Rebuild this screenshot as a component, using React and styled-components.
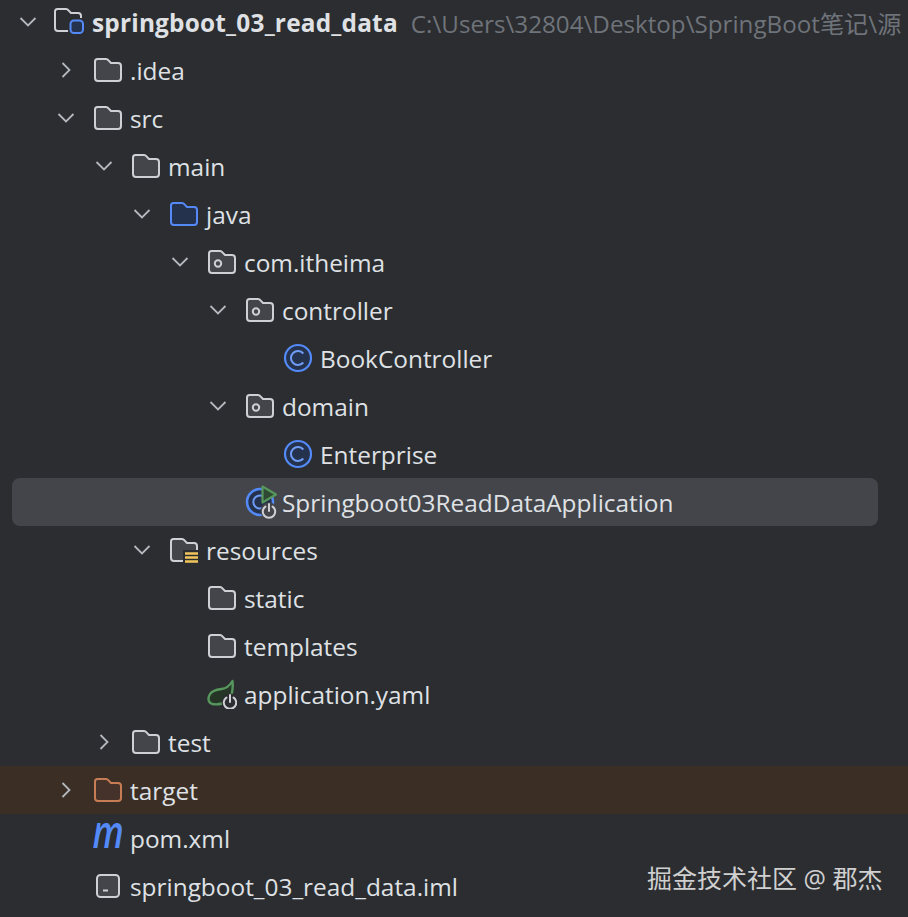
import styled, { createGlobalStyle } from "styled-components";

const GlobalStyle = createGlobalStyle`
  html, body {
    margin: 0;
    height: 100%;
    background: #2b2d30;
    overflow: hidden;
  }
`;

const BLUE = "#548af7";
const GREEN = "#57965c";

const FOLDER_PATH =
  "M1 5.5Q1 3 3.5 3H12Q13.5 3 14.5 4.4L17 7H24Q27 7 27 10V22Q27 25 24 25H4Q1 25 1 22Z";

function Folder({ stroke = "#ced0d6", fill = "#43454a", children }) {
  return (
    <svg width="28" height="28" viewBox="0 0 28 28" fill="none">
      <path d={FOLDER_PATH} fill={fill} stroke={stroke} strokeWidth="2" strokeLinejoin="round" />
      {children}
    </svg>
  );
}

function PackageIcon() {
  return (
    <Folder>
      <circle cx="10" cy="15.5" r="3.2" stroke="#ced0d6" strokeWidth="2" />
    </Folder>
  );
}

function ResourcesIcon() {
  return (
    <Folder>
      <rect x="13" y="14" width="15" height="14" fill="#2b2d30" />
      <path d="M15 17.5H28M15 21.5H28M15 25.5H28" stroke="#f2c55c" strokeWidth="2.6" />
    </Folder>
  );
}

function RootIcon() {
  return (
    <svg width="32" height="32" viewBox="0 0 32 32" fill="none">
      <path d={FOLDER_PATH} fill="#2b2d30" stroke="#ced0d6" strokeWidth="2" strokeLinejoin="round" />
      <rect x="14" y="12" width="18" height="18" rx="5" fill="#2b2d30" />
      <rect x="16.5" y="14.5" width="12.5" height="12.5" rx="3.5" fill="#25324d" stroke={BLUE} strokeWidth="2" />
    </svg>
  );
}

function ClassIcon() {
  return (
    <svg width="30" height="30" viewBox="0 0 30 30" fill="none">
      <circle cx="15" cy="15" r="13" fill="#25324d" stroke={BLUE} strokeWidth="2.2" />
      <path d="M20.3 10.5A7 7 0 1 0 20.3 19.5" stroke="#6f9cf5" strokeWidth="2" />
    </svg>
  );
}

function PowerBadge({ cx, cy, bg }) {
  return (
    <g>
      <circle cx={cx} cy={cy} r="8.5" fill={bg} />
      <path
        d={`M${cx - 3.6} ${cy - 4.4}A6.2 6.2 0 1 0 ${cx + 3.6} ${cy - 4.4}`}
        stroke="#ced0d6"
        strokeWidth="2"
        strokeLinecap="round"
      />
      <path d={`M${cx} ${cy - 7}V${cy}`} stroke="#ced0d6" strokeWidth="2" strokeLinecap="round" />
    </g>
  );
}

function RunnableClassIcon() {
  return (
    <svg width="34" height="34" viewBox="-2 0 34 34" fill="none">
      <circle cx="15" cy="17" r="13" fill="#25324d" stroke={BLUE} strokeWidth="2.6" />
      <path d="M20 12.8A6.6 6.6 0 1 0 20 21.2" stroke="#6f9cf5" strokeWidth="2" />
      <path d="M17.5 1.5L31 9.5L17.5 17.5Z" fill="#2f4a33" stroke={GREEN} strokeWidth="2.2" strokeLinejoin="round" />
      <PowerBadge cx={24} cy={26} bg="#43454a" />
    </svg>
  );
}

function SpringIcon() {
  return (
    <svg width="30" height="30" viewBox="0 0 30 30" fill="none">
      <path
        d="M25.5 2C26 7 26.5 12 23.5 18C19.5 25 10.5 26 5.5 25C1.5 24 0.5 20 2.5 16C4.5 12 9.5 10.5 14.5 10C19.5 9.5 22.5 7 25.5 2Z"
        fill="#253627"
        stroke={GREEN}
        strokeWidth="2.4"
        strokeLinejoin="round"
      />
      <PowerBadge cx={23} cy={23} bg="#2b2d30" />
    </svg>
  );
}

function ModuleFileIcon() {
  return (
    <svg width="26" height="26" viewBox="0 0 26 26" fill="none">
      <rect x="2" y="2" width="22" height="22" rx="3.5" fill="#43454a" stroke="#ced0d6" strokeWidth="2" />
      <path d="M8 17.5H13" stroke="#ced0d6" strokeWidth="2" />
    </svg>
  );
}

function Chevron({ open }) {
  return (
    <svg width="20" height="20" viewBox="0 0 20 20" fill="none">
      <path
        d={open ? "M2.5 6L10 13.5L17.5 6" : "M6.5 3L13.5 10L6.5 17"}
        stroke="#b4b8bf"
        strokeWidth="1.8"
      />
    </svg>
  );
}

const ICONS = {
  root: <RootIcon />,
  folder: <Folder />,
  source: <Folder stroke={BLUE} fill="#25324d" />,
  package: <PackageIcon />,
  resources: <ResourcesIcon />,
  excluded: <Folder stroke="#c77d55" fill="#45322b" />,
  klass: <ClassIcon />,
  runnable: <RunnableClassIcon />,
  spring: <SpringIcon />,
  module: <ModuleFileIcon />,
};

const ROWS = [
  { depth: 0, open: true, icon: "root", label: "springboot_03_read_data", bold: true, hint: "C:\\Users\\32804\\Desktop\\SpringBoot笔记\\源" },
  { depth: 1, open: false, icon: "folder", label: ".idea" },
  { depth: 1, open: true, icon: "folder", label: "src" },
  { depth: 2, open: true, icon: "folder", label: "main" },
  { depth: 3, open: true, icon: "source", label: "java" },
  { depth: 4, open: true, icon: "package", label: "com.itheima" },
  { depth: 5, open: true, icon: "package", label: "controller" },
  { depth: 6, icon: "klass", label: "BookController" },
  { depth: 5, open: true, icon: "package", label: "domain" },
  { depth: 6, icon: "klass", label: "Enterprise" },
  { depth: 5, icon: "runnable", label: "Springboot03ReadDataApplication", selected: true },
  { depth: 3, open: true, icon: "resources", label: "resources" },
  { depth: 4, icon: "folder", label: "static" },
  { depth: 4, icon: "folder", label: "templates" },
  { depth: 4, icon: "spring", label: "application.yaml" },
  { depth: 2, open: false, icon: "folder", label: "test" },
  { depth: 1, open: false, icon: "excluded", label: "target", excluded: true },
  { depth: 1, icon: "maven", label: "pom.xml" },
  { depth: 1, icon: "module", label: "springboot_03_read_data.iml" },
];

export default function App() {
  return (
    <Page>
      <GlobalStyle />
      <Tree>
        {ROWS.map((row) => (
          <Row
            key={row.label}
            $depth={row.depth}
            $selected={row.selected}
            $excluded={row.excluded}
          >
            <Toggle>{row.open !== undefined && <Chevron open={row.open} />}</Toggle>
            <IconSlot>
              {row.icon === "maven" ? <MavenGlyph>m</MavenGlyph> : ICONS[row.icon]}
            </IconSlot>
            <Label $bold={row.bold}>{row.label}</Label>
            {row.hint && <Hint>{row.hint}</Hint>}
          </Row>
        ))}
      </Tree>
      <Watermark>掘金技术社区 @ 郡杰</Watermark>
    </Page>
  );
}

const Page = styled.div`
  position: relative;
  width: 908px;
  height: 917px;
  overflow: hidden;
  background: #2b2d30;
  font-family: "Open Sans", "Noto Sans CJK SC", sans-serif;
`;

const Tree = styled.div`
  display: flex;
  flex-direction: column;
  margin-top: -2px;
`;

const Row = styled.div`
  display: flex;
  align-items: center;
  height: 48px;
  flex: none;
  white-space: nowrap;
  padding-left: ${(p) => 9 + p.$depth * 38 - (p.$selected ? 12 : 0)}px;
  margin: ${(p) => (p.$selected ? "0 30px 0 12px" : "0")};
  border-radius: ${(p) => (p.$selected ? "8px" : "0")};
  background: ${(p) =>
    p.$selected ? "#43454a" : p.$excluded ? "#3b2f25" : "transparent"};
`;

const Toggle = styled.span`
  display: flex;
  align-items: center;
  justify-content: center;
  flex: none;
  width: 38px;
`;

const IconSlot = styled.span`
  display: flex;
  align-items: center;
  justify-content: center;
  flex: none;
  width: 36px;
  height: 36px;
  margin-left: 5px;
  margin-right: 4px;
`;

const MavenGlyph = styled.span`
  font-family: "Open Sans", sans-serif;
  font-style: italic;
  font-weight: 600;
  font-size: 45px;
  line-height: 36px;
  color: #548af7;
  transform: translateY(-7px) scaleX(0.78);
`;

const Label = styled.span`
  flex: none;
  font-size: 24.4px;
  font-weight: ${(p) => (p.$bold ? 700 : 400)};
  letter-spacing: ${(p) => (p.$bold ? "0.2px" : "0")};
  color: #dfe1e5;
`;

const Hint = styled.span`
  flex: none;
  margin-left: 13px;
  font-size: 24.2px;
  color: #6f737a;
`;

const Watermark = styled.div`
  position: absolute;
  left: 647px;
  top: 861px;
  font-size: 25px;
  line-height: 34px;
  white-space: nowrap;
  color: #d0d0d0;
`;
